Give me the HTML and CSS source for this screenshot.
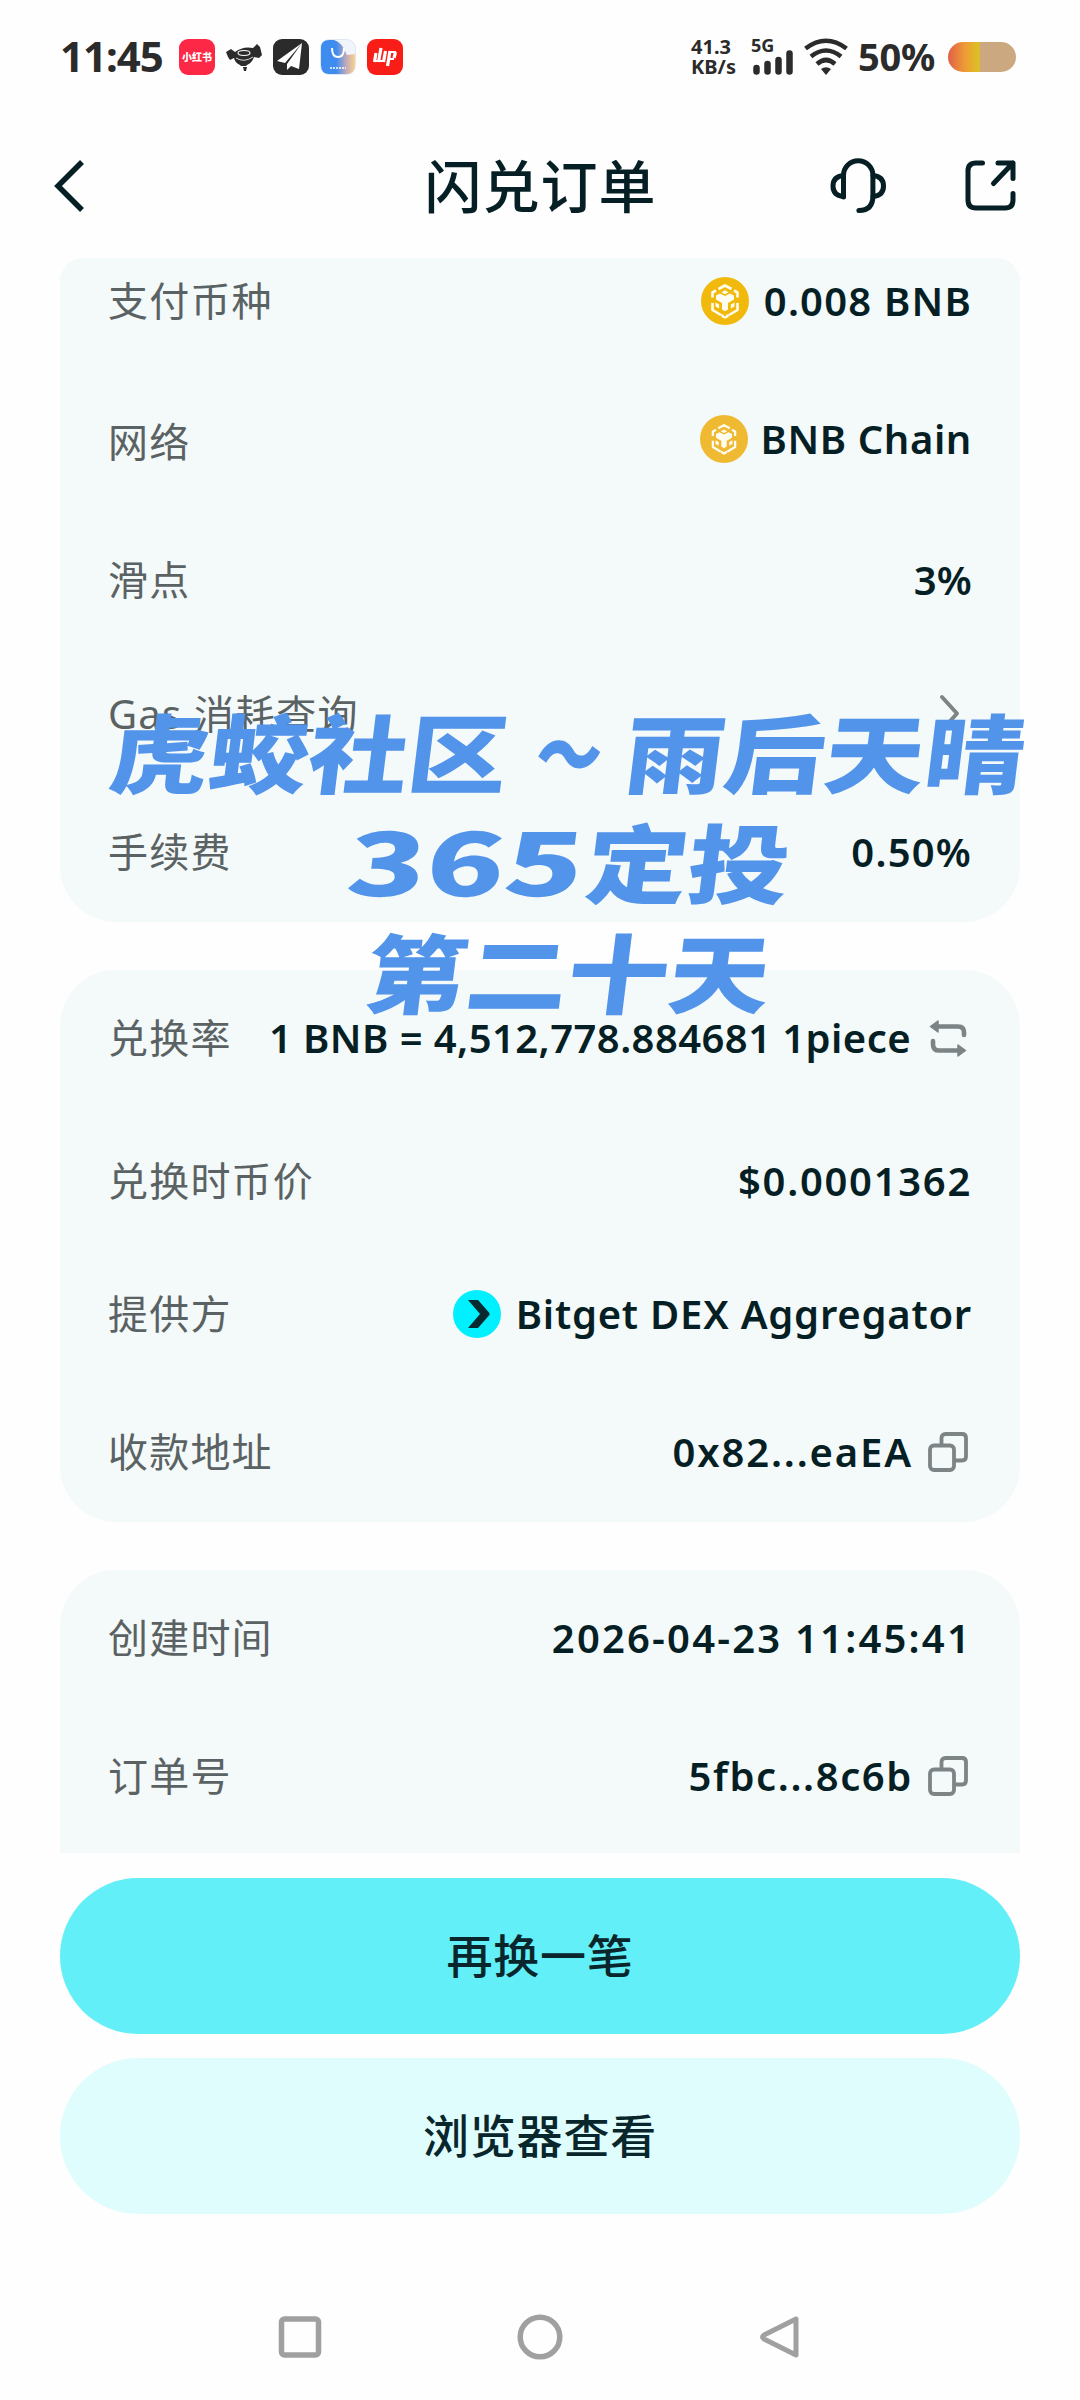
FILE: index.html
```html
<!DOCTYPE html>
<html lang="zh-CN">
<head>
<meta charset="utf-8">
<title>闪兑订单</title>
<link rel="stylesheet" href="styles.css">
</head>
<body>
<svg class="defs" width="0" height="0">
  <symbol id="bnb" viewBox="0 0 48 48">
    <g fill="none" stroke="#fffdf0" stroke-width="2.600" stroke-linejoin="round">
      <path d="M17.500 12 24 8.500 30.500 12M11.500 20.500v-5l3.500-2M36.500 20.500v-5l-3.500-2M11.500 26v7l8.500 5M36.500 26v7L28 38M21.500 37.500v1.500l2.500 1.300 2.500-1.300v-1.500"/>
    </g>
    <path fill="#fffdf0" d="M24 13.200l3.600 2-3.600 2-3.600-2zM15 18.500l4-2 5 2.500 5-2.500 4 2v4l-6 3.500v6.500l-3 1.800-3-1.800V26l-6-3.500zM14.500 25.500l3.600 2v4l-3.600-2zM33.500 25.500l-3.600 2v4l3.600-2z"/>
  </symbol>
  <symbol id="copy" viewBox="0 0 42 42">
    <g fill="none" stroke="#7c8485" stroke-width="3.800">
      <path d="M14.500 14V7q0-4 4-4H35q4 0 4 4v18.500q0 4-4 4h-7"/>
      <rect x="3" y="14.500" width="24" height="24.500" rx="4"/>
    </g>
  </symbol>
</svg>
<div class="screen">
  <div class="status">
    <span class="clock">11:45</span>
    <div class="apps">
      <span class="app red">小红书</span>
      <svg width="36" height="36" viewBox="0 0 36 36"><path fill="#2b2b2b" d="M0 13l5-3 4 3q8-6 18-4l4-4 3 3 2 8-3 3-5-1q-2 6-7 8l-1 1h-5l-1-1q-5-2-6-7l-4 2-2-3z"/><ellipse cx="18" cy="14" rx="6" ry="2.500" fill="none" stroke="#fff" stroke-width="1.100"/><path d="M10 19q8 5 17-1" fill="none" stroke="#fff" stroke-width=".8"/><path fill="#2b2b2b" d="M17 28h4l-1 4h-2z"/></svg>
      <svg width="36" height="36" viewBox="0 0 36 36"><rect width="36" height="36" rx="9" fill="#2b2b2b"/><path fill="#fff" d="M29 4 4 22l8 2zM29 4 14 25v6l4-4 8 3z"/></svg>
      <svg width="36" height="36" viewBox="0 0 36 36"><defs><linearGradient id="st"><stop offset=".45" stop-color="#3f8cf0"/><stop offset=".72" stop-color="#b9a8bd"/><stop offset="1" stop-color="#ffd08a"/></linearGradient></defs><rect x=".5" y=".5" width="35" height="35" rx="9" fill="#eff5fb" stroke="#dfe8f0"/><path fill="url(#st)" d="M9 1h5q8 2 13 15l8-1v11q0 9-9 9H9q-8 0-8-9V9q0-8 8-8z"/><path d="M12 9q0 9 6 9t6-9" fill="none" stroke="#fff" stroke-width="2"/><path d="M10 29h16" stroke="#fff" stroke-width="1.500" stroke-dasharray="2 1"/></svg>
      <svg width="36" height="36" viewBox="0 0 36 36"><rect width="36" height="36" rx="9" fill="#f91d18"/><path d="M9 14 7.500 23M14 9l-2.500 14M18.500 12l-2 11M23 12l-2.500 15M28.500 13l-1.500 6" stroke="#fff" stroke-width="3.200" fill="none"/><path d="M8 22h9M22 13h7M21 20h6" stroke="#fff" stroke-width="2"/></svg>
    </div>
    <div class="sys">
      <div class="speed"><span>41.3</span><span>KB/s</span></div>
      <div class="signal"><span>5G</span>
        <svg width="40" height="25" viewBox="0 0 40 25"><path d="M3.500 18v3.500M14.500 14v7.500M25.500 10v11.500M36.500 3.500v18" stroke="#2b2b2b" stroke-width="6.500" stroke-linecap="round"/></svg></div>
      <svg class="wifi" width="44" height="38" viewBox="0 0 44 38"><g fill="none" stroke="#2b2b2b" stroke-width="4.600"><path d="M1.500 10.500Q22-5 42.500 10.500M7 18.500Q22 6.500 37 18.500M13 26Q22 18 31 26"/></g><path fill="#2b2b2b" d="M17 31q5-3.500 10 0l-5 6z"/></svg>
      <span class="pct">50%</span>
      <span class="battery"></span>
    </div>
  </div>

  <header class="header">
    <svg width="34" height="54" viewBox="0 0 34 54"><path d="M30 3 6 27l24 24" fill="none" stroke="#051f24" stroke-width="5.500"/></svg>
    <h1>闪兑订单</h1>
    <div class="tools">
      <svg width="56" height="58" viewBox="0 0 56 58"><g fill="none" stroke="#051f24" stroke-width="5" stroke-linecap="round" stroke-linejoin="round"><path d="M13.500 40V18.500a14.700 14.700 0 0 1 29.400 0V39q0 14.500-14 14.500"/><path d="M13.500 18.500Q3 19.500 3 29t10.500 10.500M43 18.500q10.500 1 10.500 10.500T43 39.500"/></g></svg>
      <svg width="52" height="54" viewBox="0 0 52 54"><g fill="none" stroke="#051f24" stroke-width="5" stroke-linecap="round" stroke-linejoin="round"><path d="M17.500 4H11Q3 4 3 12v29q0 8 8 8h29q8 0 8-8v-6.500M33 4h15v15.500M48 4 28.500 24.500"/></g></svg>
    </div>
  </header>

  <main class="cards">
    <section class="card first">
      <div class="row"><span class="label">支付币种</span><span class="value"><svg class="coin gold" viewBox="0 0 48 48"><use href="#bnb"/></svg><b>0.008 BNB</b></span></div>
      <div class="row"><span class="label low">网络</span><span class="value"><svg class="coin amber" viewBox="-3 -3 54 54"><use href="#bnb" width="48" height="48"/></svg><b class="chain">BNB Chain</b></span></div>
      <div class="row"><span class="label">滑点</span><span class="value"><b class="slip">3%</b></span></div>
      <div class="row"><span class="label">Gas 消耗查询</span><span class="value"><svg class="chev" width="24" height="40" viewBox="0 0 24 40"><path d="M4 3l15 16.500L4 36" fill="none" stroke="#7c8485" stroke-width="4" stroke-linecap="round" stroke-linejoin="round"/></svg></span></div>
      <div class="row"><span class="label">手续费</span><span class="value"><b>0.50%</b></span></div>
    </section>
    <section class="card second">
      <div class="row"><span class="label">兑换率</span><span class="value"><b class="rate">1 BNB = 4,512,778.884681 1piece</b><svg class="swap" width="38" height="38" viewBox="0 0 38 38"><g fill="none" stroke="#7c8485" stroke-width="4.600" stroke-linecap="round"><path d="M6 7.500h23q6 0 6 6V16M32 31.500H10q-6 0-6-6V22"/></g><path fill="#7c8485" stroke="#7c8485" stroke-width="1.500" stroke-linejoin="round" d="M9 2v11L1.500 7.500zM29 26v11l7.500-5.500z"/></svg></span></div>
      <div class="row"><span class="label">兑换时币价</span><span class="value"><b class="price">$0.0001362</b></span></div>
      <div class="row"><span class="label">提供方</span><span class="value"><svg class="coin cyan" viewBox="0 0 48 48"><path fill="#062a30" d="M15 10h10l11 12.500q1.500 1.500 0 3L25 38H15l12-14z"/></svg><b class="dex">Bitget DEX Aggregator</b></span></div>
      <div class="row"><span class="label">收款地址</span><span class="value"><b class="addr">0x82...eaEA</b><svg class="copy"><use href="#copy"/></svg></span></div>
    </section>
    <section class="card third">
      <div class="row"><span class="label">创建时间</span><span class="value"><b class="time">2026-04-23 11:45:41</b></span></div>
      <div class="row"><span class="label">订单号</span><span class="value"><b class="order">5fbc...8c6b</b><svg class="copy"><use href="#copy"/></svg></span></div>
    </section>
  </main>

  <footer class="actions">
    <button class="btn primary">再换一笔</button>
    <button class="btn ghost">浏览器查看</button>
  </footer>

  <nav class="nav">
    <svg width="48" height="48" viewBox="0 0 48 48"><rect x="5.500" y="6" width="37" height="36" rx="3" fill="none" stroke="#a0a0a0" stroke-width="5.500"/></svg>
    <svg width="48" height="48" viewBox="0 0 48 48"><circle cx="24" cy="24" r="19.800" fill="none" stroke="#a0a0a0" stroke-width="5.500"/></svg>
    <svg width="48" height="48" viewBox="0 0 48 48"><path d="M40 6v36L8 26q-3-2 0-4z" fill="none" stroke="#a0a0a0" stroke-width="5" stroke-linejoin="round"/></svg>
  </nav>

  <svg class="watermark" width="1040" height="340" viewBox="40 690 1040 340">
    <g transform="translate(99 0) skewX(-7)">
      <text x="104" y="787" textLength="398" lengthAdjust="spacingAndGlyphs">虎蛟社区</text>
      <text x="530" y="787" textLength="66" lengthAdjust="spacingAndGlyphs">～</text>
      <text x="619" y="787" textLength="400" lengthAdjust="spacingAndGlyphs">雨后天晴</text>
      <text x="355" y="896" textLength="236" lengthAdjust="spacingAndGlyphs">365</text>
      <text x="594" y="897" textLength="203" lengthAdjust="spacingAndGlyphs">定投</text>
      <text x="387" y="1007" textLength="404" lengthAdjust="spacingAndGlyphs">第二十天</text>
    </g>
  </svg>
</div>
</body>
</html>
```
FILE: styles.css
```css
* { box-sizing: border-box; }
body { margin: 0; background: #fff; font-family: "Noto Sans", "Noto Sans CJK SC", sans-serif; color: #051f24; }
.defs { position: absolute; }
.screen { position: relative; width: 1080px; height: 2400px; overflow: hidden; display: flex; flex-direction: column; background: #fefefe; }

.status { height: 114px; padding: 0 64px 0 60px; display: flex; align-items: center; color: #2b2b2b; }
.clock { font: 700 42px/50px "Noto Sans"; width: 119px; white-space: nowrap; letter-spacing: -1px; padding-bottom: 2px; }
.apps { display: flex; gap: 11px; }
.app { width: 36px; height: 36px; border-radius: 9px; color: #fff; font: 900 10px/36px "Noto Sans CJK SC"; text-align: center; white-space: nowrap; }
.red { background: #fd2845; }
.sys { margin-left: auto; display: flex; align-items: center; }
.speed { width: 60px; display: flex; flex-direction: column; font: 700 20px/20px "Noto Sans"; white-space: nowrap; }
.signal { width: 53px; height: 42px; display: flex; flex-direction: column; font: 700 18px/18px "Noto Sans"; }
.signal svg { margin: -4px 0 0 2px; }
.wifi { margin-right: 10px; }
.pct { font: 700 38px/50px "Noto Sans"; width: 90px; padding-bottom: 2px; white-space: nowrap; letter-spacing: -.2px; }
.battery { width: 68px; height: 30px; border-radius: 15px; background: linear-gradient(90deg, #e0604a, #ee9b35 25%, #dcc222 46%, #cba880 47%); }

.header { height: 144px; padding: 0 63px 0 52px; display: grid; grid-template-columns: 190px 1fr 190px; align-items: center; }
.header h1 { margin: 0; text-align: center; font: 500 57px/80px "Noto Sans CJK SC"; letter-spacing: 1px; padding: 0 0 6px 12px; }
.tools { display: flex; justify-content: space-between; align-items: center; padding-left: 3px; }

.cards { height: 1595px; overflow: hidden; padding: 0 60px; display: flex; flex-direction: column; gap: 48px; }
.card { flex: none; background: #f4f9fa; padding: 0 49px 0 48px; border-radius: 56px; display: grid; align-items: center; }
.first { height: 664px; border-radius: 24px 24px 56px 56px; grid-template-rows: 86px 190px 92px 176px 100px; }
.second { height: 552px; grid-template-rows: 136px 150px 116px 160px; }
.third { height: 340px; grid-template-rows: 136px 140px; align-content: start; }
.row { display: flex; justify-content: space-between; align-items: center; height: 60px; }
.label { font: 400 40px/60px "Noto Sans", "Noto Sans CJK SC"; letter-spacing: 1.200px; color: #5a6263; white-space: nowrap; }
.low { padding-top: 6px; line-height: 54px; }
.value { display: flex; align-items: center; white-space: nowrap; }
.value b { font: 600 40px/59px "Noto Sans"; letter-spacing: 1.200px; margin-right: -1px; padding-bottom: 1px; }
.value .chain { letter-spacing: .6px; }
.value .slip { letter-spacing: .2px; }
.value .rate { letter-spacing: .430px; }
.value .price { letter-spacing: 1.700px; }
.value .dex { letter-spacing: .770px; }
.value .addr { letter-spacing: 1.850px; }
.value .time { letter-spacing: 2.200px; }
.value .order { letter-spacing: 1.600px; }
.coin { width: 48px; height: 48px; border-radius: 50%; margin-right: 15px; }
.gold { background: #f0b90b; }
.amber { background: #f0b932; margin-right: 12px; }
.cyan { background: #00f0ff; }
.copy { width: 42px; height: 42px; margin: 0 2px 0 15px; }
.swap { margin: 0 4px 0 19px; }
.chev { margin-right: 9px; }

.actions { padding: 25px 60px 0; display: flex; flex-direction: column; gap: 24px; }
.btn { height: 156px; margin: 0; border: 0; border-radius: 78px; font: 500 46px/60px "Noto Sans CJK SC"; color: #08262c; letter-spacing: .8px; padding: 0 0 6px; }
.primary { background: #62eff7; }
.ghost { background: #e0fdfe; }
.nav { margin-top: auto; height: 127px; padding: 40px 0 0 276px; display: flex; align-items: flex-start; gap: 192px; }

.watermark { position: absolute; left: 40px; top: 690px; }
.watermark text { font: 900 86px "Noto Sans CJK SC"; fill: #5294ea; }
```
